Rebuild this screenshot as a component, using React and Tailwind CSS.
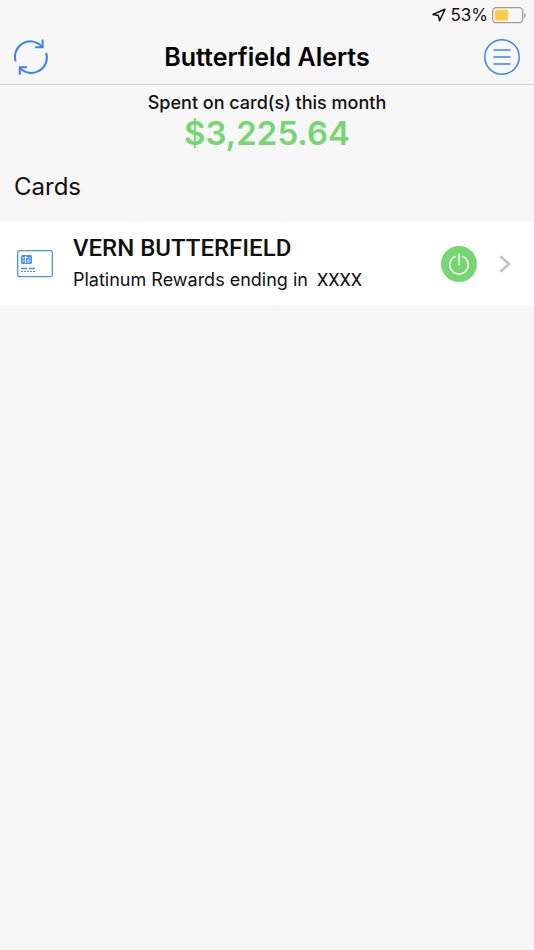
const cards = [
  { holder: 'VERN BUTTERFIELD', detail: 'Platinum Rewards ending in', digits: 'XXXX' },
];

function RefreshIcon() {
  return (
    <svg width="36" height="40" viewBox="0 0 36 40" fill="none" stroke="#3b82f7" strokeWidth="2">
      <path d="M1.700 24.500A15.400 15.400 0 0 1 28 9.700" />
      <path d="M28.600 2.500V10.200H21" />
      <path d="M32.200 16A15.400 15.400 0 0 1 6 30.800" />
      <path d="M5.800 37.800V30.300H13" />
    </svg>
  );
}

function MenuIcon() {
  return (
    <svg width="36" height="36" viewBox="0 0 36 36" fill="none" stroke="#3b82f7" strokeWidth="1.500">
      <circle cx="18" cy="18" r="17.200" />
      <path d="M9.500 11h17M9.500 18h17M9.500 25h17" />
    </svg>
  );
}

function LocationIcon() {
  return (
    <svg width="14" height="14" viewBox="0 0 14 14" fill="none" stroke="#111" strokeWidth="1.500" strokeLinejoin="round">
      <path d="M13 1.200L1 6.400l5.300 1.200L7.600 12.800z" />
    </svg>
  );
}

function BatteryIcon() {
  return (
    <svg width="34" height="17" viewBox="0 0 34 17" fill="none">
      <rect x="0.700" y="0.700" width="30" height="15" rx="3.500" stroke="#9b9b9b" strokeWidth="1.300" />
      <rect x="2.800" y="2.800" width="13.500" height="10.600" rx="1.500" fill="#f7ce46" />
      <path d="M32.200 6v5c1-.4 1.500-1.300 1.500-2.500S33.200 6.400 32.200 6z" fill="#9b9b9b" />
    </svg>
  );
}

function CardIcon() {
  return (
    <svg width="36" height="28" viewBox="0 0 36 28" fill="none" stroke="#4a90f8">
      <rect x="0.700" y="0.700" width="34.600" height="26" rx="1.800" strokeWidth="1.300" />
      <rect x="4" y="5" width="11" height="9" rx="1.500" fill="#4a90f8" stroke="none" />
      <path d="M5 8h2.500M5 11h2.500M8.500 6v7M8.500 7.500h2.500M11 13V9.500h1M12.500 8h1.500M12.500 11h1.500" stroke="white" strokeWidth="0.900" />
      <path d="M4 18.500h6M12 18.500h6" strokeWidth="1.500" />
      <path d="M4 21.500h14" strokeDasharray="2 1" />
    </svg>
  );
}

function PowerIcon() {
  return (
    <svg width="22" height="22" viewBox="0 0 22 22" fill="none" stroke="white" strokeWidth="1.500" strokeLinecap="round">
      <path d="M7 3.500A9.200 9.200 0 1 0 15 3.500" />
      <path d="M11 1.200v10.500" />
    </svg>
  );
}

function CardRow({ card }) {
  return (
    <li className="flex items-center bg-white h-[83px] pl-[17px] pr-[23px]">
      <CardIcon />
      <div className="flex-1 ml-5">
        <h3 className="font-[Roboto,sans-serif] font-medium text-[24px] leading-7">{card.holder}</h3>
        <p className="mt-1 text-[18px] leading-7 whitespace-nowrap">
          {card.detail} <span className="font-[Roboto,sans-serif] ml-1">{card.digits}</span>
        </p>
      </div>
      <button aria-label="Turn card off" className="w-9 h-9 rounded-full bg-[#76d672] flex items-center justify-center">
        <PowerIcon />
      </button>
      <svg className="ml-[22px]" width="12" height="18" viewBox="0 0 12 18" fill="none" stroke="#c5c5c8" strokeWidth="2.800">
        <path d="M1.500 1.200L9.800 9l-8.300 7.800" />
      </svg>
    </li>
  );
}

export default function App() {
  return (
    <div className="min-h-screen bg-[#f7f7f7] text-[#111] font-[Inter,sans-serif]">
      <div className="h-[30px] flex items-center justify-end gap-1 pr-2">
        <LocationIcon />
        <span className="text-[17px] leading-5">53%</span>
        <BatteryIcon />
      </div>
      <header className="h-[55px] flex items-center justify-between px-[14px] border-b border-[#d2d2d2]">
        <button aria-label="Refresh"><RefreshIcon /></button>
        <h1 className="font-semibold text-[25px] leading-8 text-black">Butterfield Alerts</h1>
        <button aria-label="Menu"><MenuIcon /></button>
      </header>
      <main>
        <section className="pt-1 text-center">
          <p className="font-medium text-[18px] leading-7">Spent on card(s) this month</p>
          <p className="font-semibold text-[33px] leading-8 text-[#76d672]">$3,225.64</p>
        </section>
        <h2 className="mt-[22px] mb-[19px] px-[14px] text-[24px] leading-8">Cards</h2>
        <ul>
          {cards.map((card) => (
            <CardRow key={card.holder} card={card} />
          ))}
        </ul>
      </main>
    </div>
  );
}
